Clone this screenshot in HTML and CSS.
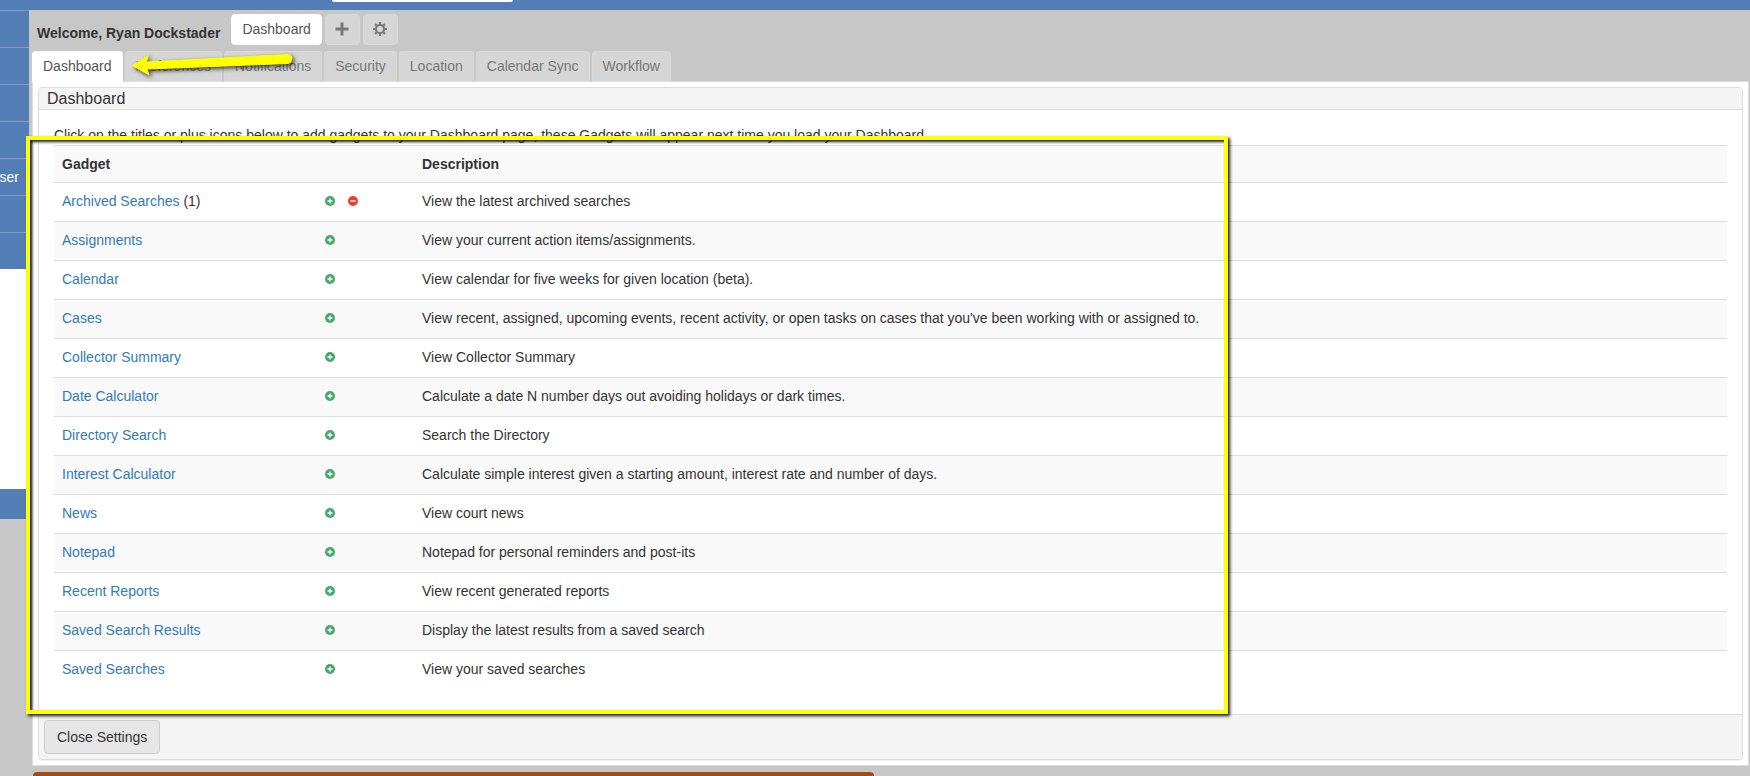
FILE: index.html
```html
<!DOCTYPE html>
<html lang="en">
<head>
<meta charset="utf-8">
<title>Dashboard Settings</title>
<link rel="stylesheet" href="styles.css">
</head>
<body>
<svg class="sprite" aria-hidden="true">
  <symbol id="add" viewBox="0 0 10 10"><circle cx="5" cy="5" r="5" fill="#45a96b"/><path d="M5 2.5v5M2.5 5h5" stroke="#fff" stroke-width="1.3"/></symbol>
  <symbol id="remove" viewBox="0 0 10 10"><circle cx="5" cy="5" r="5" fill="#f03e26"/><path d="M2.3 5h5.4" stroke="#fff" stroke-width="1.5"/></symbol>
</svg>
<header class="topbar"><div class="topbar-field"></div></header>
<div class="layout">
  <nav class="sidebar" aria-label="Main">
    <a href="#" class="side-item" aria-label="Item 1"></a>
    <a href="#" class="side-item" aria-label="Item 2"></a>
    <a href="#" class="side-item" aria-label="Item 3"></a>
    <a href="#" class="side-item" aria-label="Item 4"></a>
    <a href="#" class="side-item">ser</a>
    <a href="#" class="side-item" aria-label="Item 6"></a>
    <a href="#" class="side-item" aria-label="Item 7"></a>
    <div class="side-blank"></div>
    <div class="side-foot"></div>
  </nav>
  <main class="main">
    <div class="welcome">
      <strong class="welcome-name">Welcome, Ryan Dockstader</strong>
      <button class="pill active" type="button">Dashboard</button>
      <button class="pill icon-pill" type="button" aria-label="Add"><svg width="14" height="14" viewBox="0 0 14 14"><path d="M7 .5v13M.5 7h13" stroke="#777" stroke-width="3"/></svg></button>
      <button class="pill icon-pill" type="button" aria-label="Settings"><svg width="14" height="14" viewBox="0 0 14 14"><g fill="none" stroke="#777"><circle cx="7" cy="7" r="4.100" stroke-width="2"/><path d="M7 0v2.400M7 11.600V14M0 7h2.400M11.600 7H14M2.100 2.100l1.600 1.600M10.300 10.300l1.600 1.600M2.100 11.900l1.600-1.600M10.300 3.700l1.600-1.600" stroke-width="2.200"/></g></svg></button>
    </div>
    <nav class="tabs" aria-label="Settings">
      <a href="#" class="tab active">Dashboard</a>
      <a href="#" class="tab">Preferences</a>
      <a href="#" class="tab">Notifications</a>
      <a href="#" class="tab">Security</a>
      <a href="#" class="tab">Location</a>
      <a href="#" class="tab">Calendar Sync</a>
      <a href="#" class="tab">Workflow</a>
    </nav>
    <div class="pane">
      <section class="card">
        <h1 class="card-title">Dashboard</h1>
        <div class="card-body">
          <p class="intro">Click on the titles or plus icons below to add gadgets to your Dashboard page, these Gadgets will appear next time you load your Dashboard.</p>
          <table class="gadgets">
            <thead><tr><th class="col-name">Gadget</th><th class="col-actions"></th><th>Description</th></tr></thead>
            <tbody>
              <tr><td><a href="#">Archived Searches</a> (1)</td><td><div class="actions"><button type="button" aria-label="Add"><svg><use href="#add"/></svg></button><button type="button" aria-label="Remove"><svg><use href="#remove"/></svg></button></div></td><td>View the latest archived searches</td></tr>
              <tr><td><a href="#">Assignments</a></td><td><div class="actions"><button type="button" aria-label="Add"><svg><use href="#add"/></svg></button></div></td><td>View your current action items/assignments.</td></tr>
              <tr><td><a href="#">Calendar</a></td><td><div class="actions"><button type="button" aria-label="Add"><svg><use href="#add"/></svg></button></div></td><td>View calendar for five weeks for given location (beta).</td></tr>
              <tr><td><a href="#">Cases</a></td><td><div class="actions"><button type="button" aria-label="Add"><svg><use href="#add"/></svg></button></div></td><td>View recent, assigned, upcoming events, recent activity, or open tasks on cases that you've been working with or assigned to.</td></tr>
              <tr><td><a href="#">Collector Summary</a></td><td><div class="actions"><button type="button" aria-label="Add"><svg><use href="#add"/></svg></button></div></td><td>View Collector Summary</td></tr>
              <tr><td><a href="#">Date Calculator</a></td><td><div class="actions"><button type="button" aria-label="Add"><svg><use href="#add"/></svg></button></div></td><td>Calculate a date N number days out avoiding holidays or dark times.</td></tr>
              <tr><td><a href="#">Directory Search</a></td><td><div class="actions"><button type="button" aria-label="Add"><svg><use href="#add"/></svg></button></div></td><td>Search the Directory</td></tr>
              <tr><td><a href="#">Interest Calculator</a></td><td><div class="actions"><button type="button" aria-label="Add"><svg><use href="#add"/></svg></button></div></td><td>Calculate simple interest given a starting amount, interest rate and number of days.</td></tr>
              <tr><td><a href="#">News</a></td><td><div class="actions"><button type="button" aria-label="Add"><svg><use href="#add"/></svg></button></div></td><td>View court news</td></tr>
              <tr><td><a href="#">Notepad</a></td><td><div class="actions"><button type="button" aria-label="Add"><svg><use href="#add"/></svg></button></div></td><td>Notepad for personal reminders and post-its</td></tr>
              <tr><td><a href="#">Recent Reports</a></td><td><div class="actions"><button type="button" aria-label="Add"><svg><use href="#add"/></svg></button></div></td><td>View recent generated reports</td></tr>
              <tr><td><a href="#">Saved Search Results</a></td><td><div class="actions"><button type="button" aria-label="Add"><svg><use href="#add"/></svg></button></div></td><td>Display the latest results from a saved search</td></tr>
              <tr><td><a href="#">Saved Searches</a></td><td><div class="actions"><button type="button" aria-label="Add"><svg><use href="#add"/></svg></button></div></td><td>View your saved searches</td></tr>
            </tbody>
          </table>
        </div>
        <footer class="card-foot"><button class="close" type="button">Close Settings</button></footer>
      </section>
    </div>
    <div class="next-panel"></div>
  </main>
</div>
<div class="highlight"></div>
<svg class="arrow" width="180" height="40" viewBox="0 0 180 40" aria-hidden="true">
  <path d="M7.500 20.500 23 10.500 21.500 17 162 9.500Q167 9.500 167 14 166.500 18 163 18.500L22 24 24 30Z" fill="#ff0" stroke="#ff0" stroke-width="1" stroke-linejoin="round"/>
</svg>
</body>
</html>
```
FILE: styles.css
```css
* { box-sizing: border-box; }
html, body { height: 100%; }
body {
  margin: 0;
  position: relative;
  display: flex;
  flex-direction: column;
  overflow: hidden;
  background: #c7c7c7;
  color: #333;
  font: 14px/20px "Liberation Sans", Arial, sans-serif;
}
a { color: #337ab7; text-decoration: none; }
button { font: inherit; cursor: pointer; }
.sprite { display: none; }

.topbar { flex: none; height: 10px; background: #537db5; }
.topbar-field { width: 181px; height: 2px; margin-left: 332px; background: #fff; border-radius: 0 0 3px 3px; }
.layout { flex: none; display: flex; align-items: flex-start; }

.sidebar { flex: none; width: 29px; }
.side-item {
  display: flex;
  align-items: center;
  justify-content: flex-end;
  height: 37px;
  padding-right: 10px;
  border-top: 1px solid #7f9fc9;
  background: #537db5;
  color: #fff;
}
.side-blank { height: 220px; background: #fff; }
.side-foot { height: 30px; background: #537db5; }

.main { flex: 1; min-width: 0; padding: 4px 1px 0 3px; }
.welcome { display: flex; gap: 3px; padding-left: 5px; }
.welcome-name { padding: 9px 8px 0 0; line-height: 20px; }
.pill {
  display: flex;
  align-items: center;
  justify-content: center;
  height: 31px;
  padding: 0 10px 2px;
  border: 1px solid #d9d9d9;
  border-radius: 4px;
  background: #d6d6d6;
  color: #777;
}
.pill.active, .tab.active { background: #fff; border-color: #fff; color: #555; }
.icon-pill { width: 35px; padding: 0 0 2px; }

.tabs { display: flex; gap: 2px; padding-top: 6px; }
.tab {
  height: 30px;
  padding: 4px 10px;
  border: 1px solid #d9d9d9;
  border-bottom: 0;
  border-radius: 4px 4px 0 0;
  background: #d6d6d6;
  color: #777;
}
.tab.active { height: 31px; margin-bottom: -1px; position: relative; }

.pane { padding: 5px; border: 1px solid #ddd; background: #fff; }
.card { border: 1px solid #ddd; border-radius: 4px; box-shadow: 0 1px 1px rgba(0, 0, 0, .05); overflow: hidden; }
.card-title {
  margin: 0;
  padding: 0 8px;
  border-bottom: 1px solid #ddd;
  background: #f4f4f4;
  font-size: 16px;
  font-weight: 400;
  line-height: 21px;
}
.card-body { padding: 15px 15px 25px; }
.intro { margin: 0; }
.gadgets { width: 100%; border-spacing: 0; table-layout: fixed; }
.gadgets th, .gadgets td { height: 39px; padding: 0 8px 2px; border-top: 1px solid #ddd; text-align: left; vertical-align: middle; }
.gadgets th { height: 37px; padding-bottom: 0; background: #f9f9f9; }
.gadgets tbody tr:nth-child(even) { background: #f9f9f9; }
.gadgets .col-name { width: 263px; }
.gadgets .col-actions { width: 97px; }
.actions { display: flex; gap: 13px; }
.actions button { display: flex; padding: 0; border: 0; background: none; }
.actions svg { width: 10px; height: 10px; }
.card-foot { padding: 5px; border-top: 1px solid #ddd; background: #f4f4f4; }
.close { display: block; height: 34px; padding: 0 12px; border: 1px solid #ccc; border-radius: 4px; background: #e6e6e6; color: #333; }
.next-panel { width: 49%; height: 40px; margin: 6px 0 0 1px; border-radius: 4px 4px 0 0; background: #a64b10; }

/* Callouts drawn over the page */
.highlight {
  position: absolute;
  left: 26px;
  top: 136px;
  width: 1202px;
  height: 578px;
  border: 4px solid #ff0;
  box-shadow: 2px 2px 3px rgba(0, 0, 0, .9), inset 2px 2px 3px rgba(0, 0, 0, .9);
  pointer-events: none;
}
.arrow { position: absolute; left: 125px; top: 45px; filter: drop-shadow(2px 2px 2px rgba(0, 0, 0, .7)); pointer-events: none; }
```
